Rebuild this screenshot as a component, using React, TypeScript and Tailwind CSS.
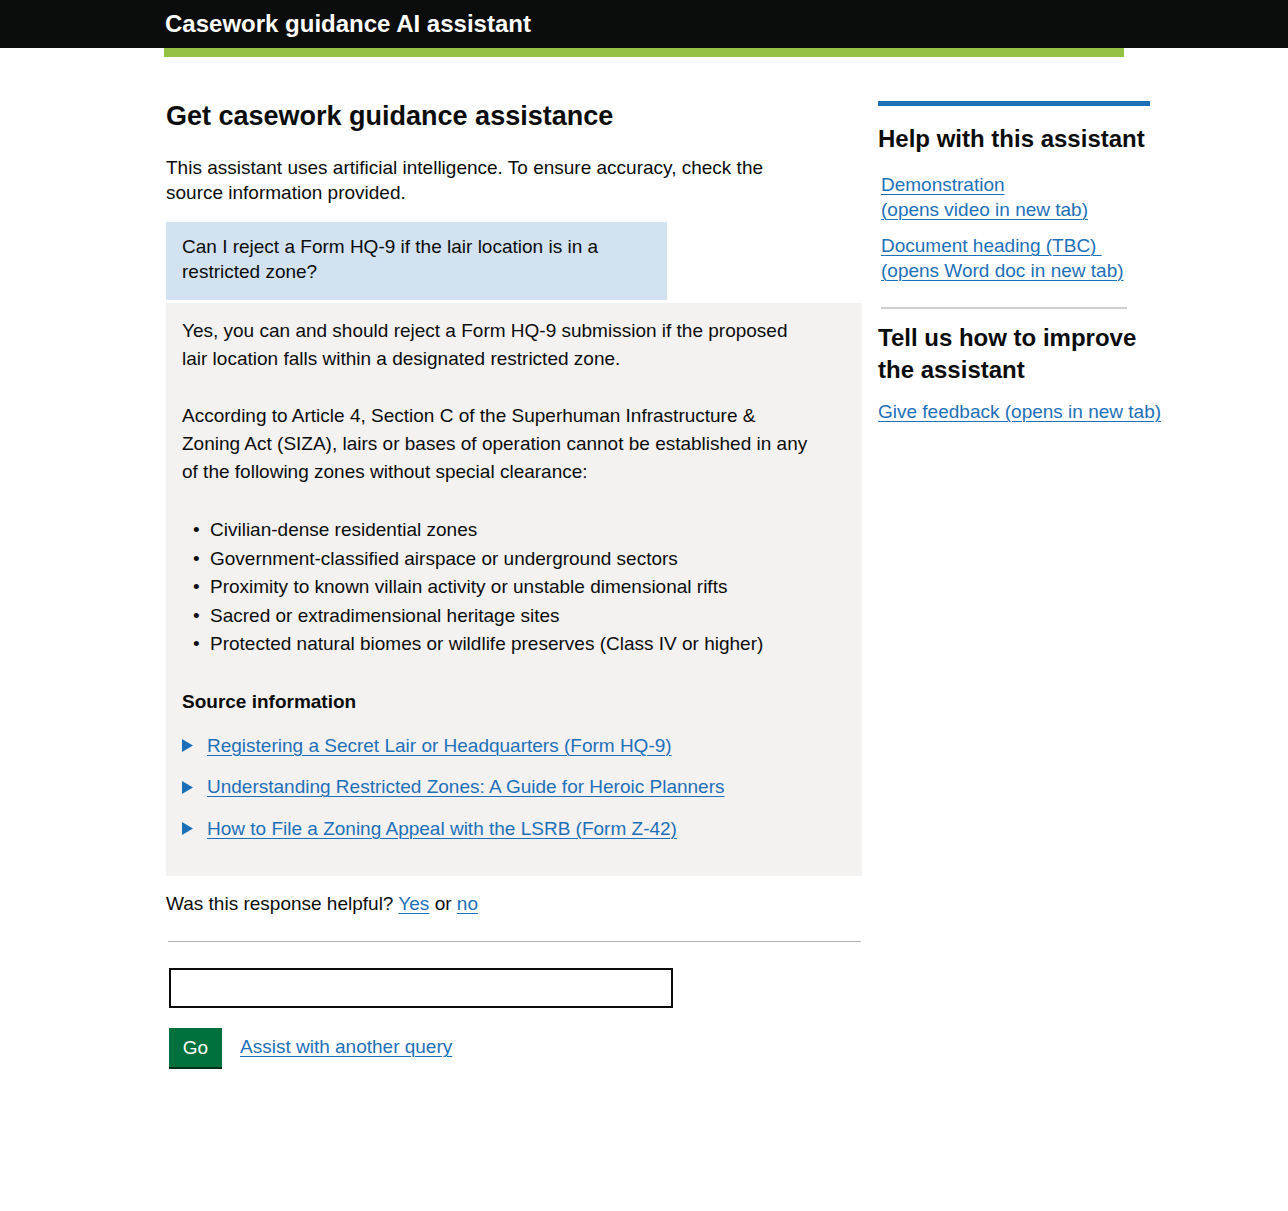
import React from "react";

const font = "font-['Liberation_Sans',Arial,sans-serif]";
const link = "text-[#1d70b8] underline underline-offset-[3px] decoration-1";

const zones = [
  "Civilian-dense residential zones",
  "Government-classified airspace or underground sectors",
  "Proximity to known villain activity or unstable dimensional rifts",
  "Sacred or extradimensional heritage sites",
  "Protected natural biomes or wildlife preserves (Class IV or higher)",
];

const sources = [
  "Registering a Secret Lair or Headquarters (Form HQ-9)",
  "Understanding Restricted Zones: A Guide for Heroic Planners",
  "How to File a Zoning Appeal with the LSRB (Form Z-42)",
];

function Triangle() {
  return (
    <svg width="11" height="13" viewBox="0 0 11 13" className="shrink-0">
      <path d="M0 0 L11 6.5 L0 13 Z" fill="#1d70b8" />
    </svg>
  );
}

export default function App() {
  return (
    <div className={`${font} min-h-[1211px] bg-white text-[#0b0c0c]`}>
      <header className="h-[48px] bg-[#0b0c0c]">
        <div className="mx-auto w-[960px] pl-[1px] text-[24px] font-bold leading-[48px] text-white">
          Casework guidance AI assistant
        </div>
      </header>
      <div className="mx-auto h-[9px] w-[960px] bg-[#94c244]" />

      <main className="mx-auto flex w-[960px] pt-[43px]">
        <div className="ml-[2px] w-[696px] shrink-0">
          <h1 className="text-[27px] font-bold leading-[32px]">Get casework guidance assistance</h1>
          <p className="mt-[23px] max-w-[610px] text-[19px] leading-[25px]">
            This assistant uses artificial intelligence. To ensure accuracy, check the source information provided.
          </p>

          <div className="mt-[17px] w-[501px] bg-[#d2e2f1] px-4 pb-[16px] pt-[12px] text-[19px] leading-[25px]">
            Can I reject a Form HQ-9 if the lair location is in a restricted zone?
          </div>

          <div className="mt-[3px] bg-[#f3f2f1] px-4 pb-[33px] pt-[14px] text-[19px] leading-[28px]">
            <div className="max-w-[632px]">
              <p className="mb-[29px]">
                Yes, you can and should reject a Form HQ-9 submission if the proposed lair location falls within a
                designated restricted zone.
              </p>
              <p>
                According to Article 4, Section C of the Superhuman Infrastructure &amp; Zoning Act (SIZA), lairs or
                bases of operation cannot be established in any of the following zones without special clearance:
              </p>
              <ul className="mt-[30px]">
                {zones.map((z) => (
                  <li key={z} className="flex leading-[28.5px]">
                    <span className="w-[28px] pl-[11px]">•</span>
                    <span>{z}</span>
                  </li>
                ))}
              </ul>
            </div>
            <h2 className="mt-[29px] font-bold">Source information</h2>
            <div className="mt-[16px] flex flex-col gap-[13.5px]">
              {sources.map((s) => (
                <div key={s} className="flex items-center gap-[14px]">
                  <Triangle />
                  <a href="#" className={link}>
                    {s}
                  </a>
                </div>
              ))}
            </div>
          </div>

          <p className="mt-[14px] text-[19px] leading-[28px]">
            Was this response helpful?{" "}
            <a href="#" className={link}>
              Yes
            </a>{" "}
            or{" "}
            <a href="#" className={link}>
              no
            </a>
          </p>
          <hr className="ml-[2px] mt-[23px] w-[693px] border-0 border-t border-[#b1b4b6]" />

          <input
            type="text"
            aria-label="Query"
            className="ml-[3px] mt-[26px] block h-[40px] w-[504px] border-2 border-[#0b0c0c] px-2 text-[19px] outline-none"
          />
          <div className="ml-[3px] mt-[20px] flex items-center gap-[18px]">
            <button className="h-[39px] w-[53px] pt-[2px] bg-[#00703c] text-[19px] text-white shadow-[0_2px_0_#002d18]">
              Go
            </button>
            <a href="#" className={`${link} text-[19px]`}>
              Assist with another query
            </a>
          </div>
        </div>

        <aside className="ml-[16px] w-[290px] shrink-0">
          <div className="mt-[1px] h-[5px] w-[272px] bg-[#1d70b8]" />
          <h2 className="mt-[17px] text-[24px] font-bold leading-[32px]">Help with this assistant</h2>
          <div className="ml-[3px] mt-[18px] text-[19px] leading-[24.5px]">
            <a href="#" className={`${link} block w-fit`}>
              Demonstration
              <br />
              (opens video in new tab)
            </a>
            <a href="#" className={`${link} mt-[12px] block w-fit`}>
              Document heading (TBC)&nbsp;
              <br />
              (opens Word doc in new tab)
            </a>
            <hr className="mt-[24px] w-[246px] border-0 border-t-2 border-[#cecece]" />
          </div>
          <h2 className="mt-[13px] text-[24px] font-bold leading-[32px]">Tell us how to improve the assistant</h2>
          <a href="#" className={`${link} mt-[12px] block text-[19px] leading-[28px]`}>
            Give feedback (opens in new tab)
          </a>
        </aside>
      </main>
    </div>
  );
}
